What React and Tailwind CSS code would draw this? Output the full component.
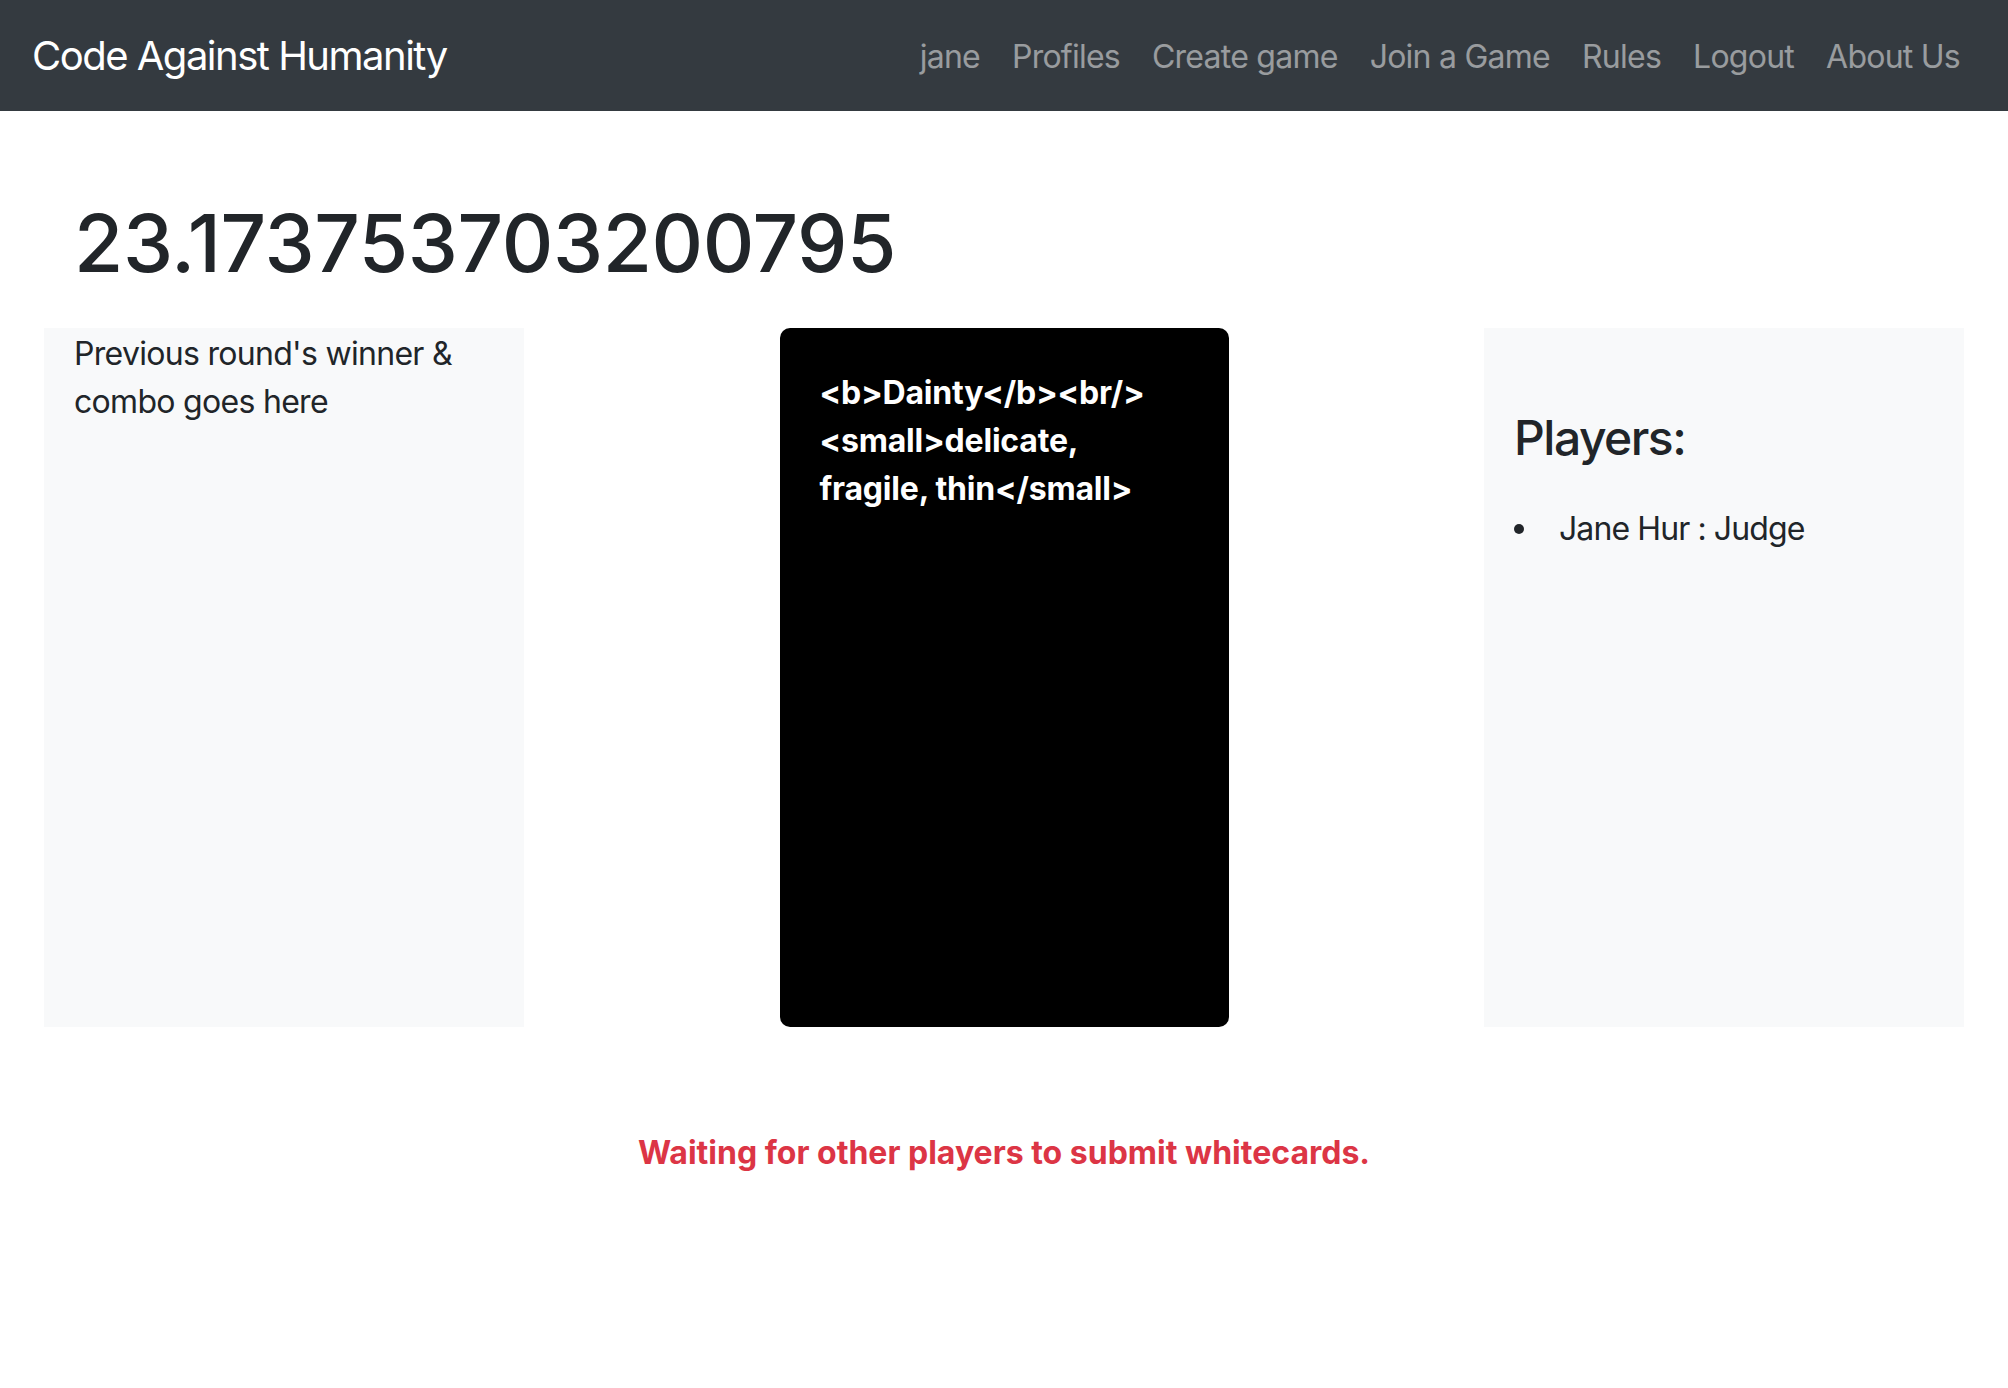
import React from 'react';

const links = ['jane', 'Profiles', 'Create game', 'Join a Game', 'Rules', 'Logout', 'About Us'];

function Navbar() {
  return (
    <nav className="flex h-[111px] items-center justify-between bg-[#343a40] px-[32px]">
      <a className="text-[40px] leading-[60px] tracking-[-1.5px] text-white">Code Against Humanity</a>
      <ul className="mt-[2px] flex items-center">
        {links.map((link) => (
          <li key={link}>
            <a className="block px-[16px] text-[32px] leading-[48px] tracking-[-0.75px] text-white/50">{link}</a>
          </li>
        ))}
      </ul>
    </nav>
  );
}

export default function App() {
  return (
    <div className="min-h-[1388px] bg-white font-['Inter','Liberation_Sans',sans-serif] text-[#212529]">
      <Navbar />
      <main className="mx-auto w-[1920px]">
        <h1 className="mt-[84px] mb-[37px] px-[30px] text-[80px] font-medium leading-[96px] tracking-[-0.4px]">
          23.173753703200795
        </h1>
        <div className="flex h-[699px]">
          <div className="w-[480px] bg-[#f8f9fa] px-[30px] pt-[2px]">
            <p className="text-[32px] leading-[48px] tracking-[-0.7px]">Previous round's winner &amp; combo goes here</p>
          </div>
          <div className="flex flex-1 justify-center">
            <div className="w-[449px] rounded-[10px] bg-black px-[40px] pt-[41px]">
              <p className="text-[32px] font-bold leading-[48px] tracking-[-0.2px] text-white">
                &lt;b&gt;Dainty&lt;/b&gt;&lt;br/&gt; &lt;small&gt;delicate, fragile, thin&lt;/small&gt;
              </p>
            </div>
          </div>
          <div className="w-[480px] bg-[#f8f9fa] px-[30px] pt-[81px]">
            <h4 className="text-[48px] font-medium leading-[58px] tracking-[-1.5px]">Players:</h4>
            <ul className="mt-[38px]">
              <li className="flex items-center text-[32px] leading-[48px] tracking-[-0.9px]">
                <span className="ml-0 mr-[35px] h-[10px] w-[10px] rounded-full bg-[#212529]" />
                Jane Hur : Judge
              </li>
            </ul>
          </div>
        </div>
        <p className="mt-[102px] text-center text-[32px] font-bold leading-[48px] text-[#dc3545]">
          Waiting for other players to submit whitecards.
        </p>
      </main>
    </div>
  );
}
